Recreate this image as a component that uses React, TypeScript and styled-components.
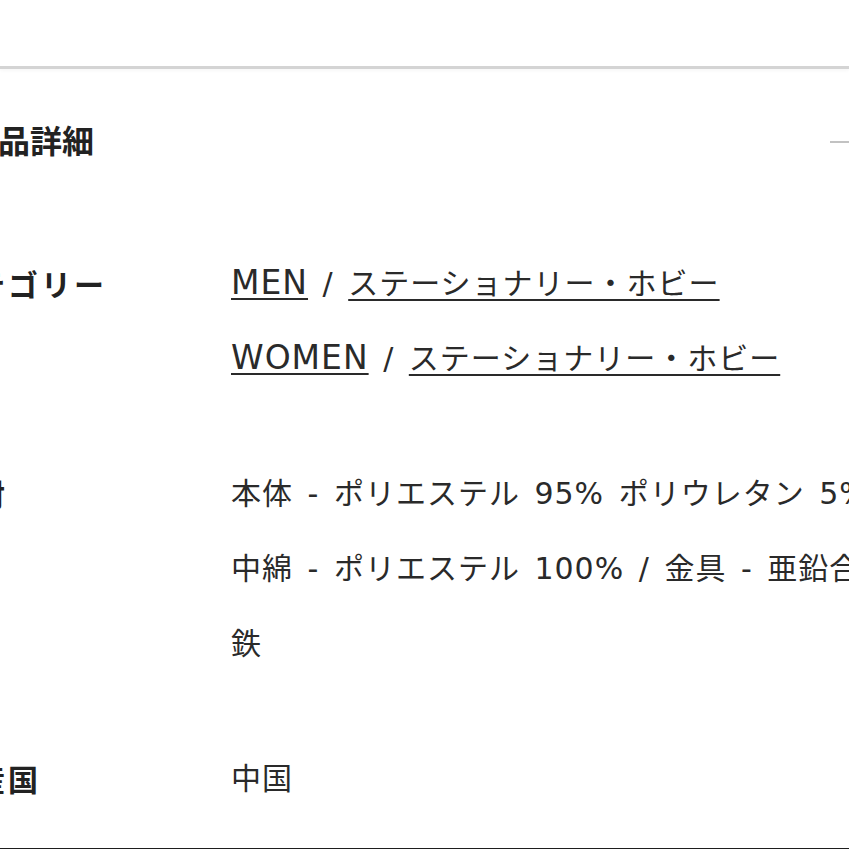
import React from 'react';
import styled, { createGlobalStyle } from 'styled-components';

const GlobalStyle = createGlobalStyle`
  html, body {
    margin: 0;
    padding: 0;
    background: #fff;
    overflow: hidden;
  }
  body {
    font-family: "Noto Sans CJK JP", "Noto Sans", sans-serif;
    color: #222;
  }
`;

const Page = styled.div`
  width: 849px;
  height: 849px;
  overflow: hidden;
`;

const TopBar = styled.div`
  height: 66px;
  border-bottom: 3px solid #d4d4d4;
  box-shadow: 0 2px 3px rgba(0, 0, 0, 0.03);
`;

const HeadRow = styled.div`
  display: flex;
  align-items: center;
  justify-content: space-between;
  margin: 0 -40px 0 -34px;
  padding-top: 48px;
`;

const Title = styled.h2`
  margin: 0;
  font-size: 32px;
  line-height: 45px;
  font-weight: 700;
  color: #222;
`;

const Minus = styled.span`
  display: block;
  width: 30px;
  height: 2px;
  margin: 5px 29px 0 0;
  background: #c2c2c2;
`;

const SpecTable = styled.dl`
  display: grid;
  grid-template-columns: 289px 1fr;
  row-gap: 60px;
  margin: 84px 0 0 -58px;
  padding-bottom: 32px;
  border-bottom: 2px solid #1e1e1e;
`;

const Label = styled.dt`
  margin: 0;
  font-size: 30px;
  line-height: 75px;
  letter-spacing: 3px;
  font-weight: 700;
  color: #222;
  white-space: nowrap;
`;

const Value = styled.dd`
  margin: 0;
  font-family: "DejaVu Sans", "Noto Sans CJK JP", sans-serif;
  font-size: 30px;
  line-height: 75px;
  letter-spacing: 1px;
  word-spacing: 4px;
  color: #2a2a2a;
  white-space: nowrap;
`;

const Line = styled.div`
  height: 75px;
  white-space: nowrap;
`;

const Link = styled.a<{ $latin?: boolean }>`
  color: #2a2a2a;
  font-size: ${(p) => (p.$latin ? '33px' : 'inherit')};
  line-height: 1;
  text-decoration: underline;
  text-decoration-thickness: 2px;
  text-underline-offset: ${(p) => (p.$latin ? '4px' : '5px')};
`;

const categories = [
  { main: 'MEN', sub: 'ステーショナリー・ホビー' },
  { main: 'WOMEN', sub: 'ステーショナリー・ホビー' },
];

const materials = [
  '本体 - ポリエステル 95% ポリウレタン 5% /',
  '中綿 - ポリエステル 100% / 金具 - 亜鉛合金 /',
  '鉄',
];

export default function App() {
  return (
    <Page>
      <GlobalStyle />
      <TopBar />
      <HeadRow>
        <Title>商品詳細</Title>
        <Minus />
      </HeadRow>
      <SpecTable>
        <Label>カテゴリー</Label>
        <Value>
          {categories.map((c) => (
            <Line key={c.main}>
              <Link href="#" $latin>
                {c.main}
              </Link>
              {' / '}
              <Link href="#">{c.sub}</Link>
            </Line>
          ))}
        </Value>
        <Label>素材</Label>
        <Value>
          {materials.map((m) => (
            <Line key={m}>{m}</Line>
          ))}
        </Value>
        <Label>原産国</Label>
        <Value>中国</Value>
      </SpecTable>
    </Page>
  );
}
